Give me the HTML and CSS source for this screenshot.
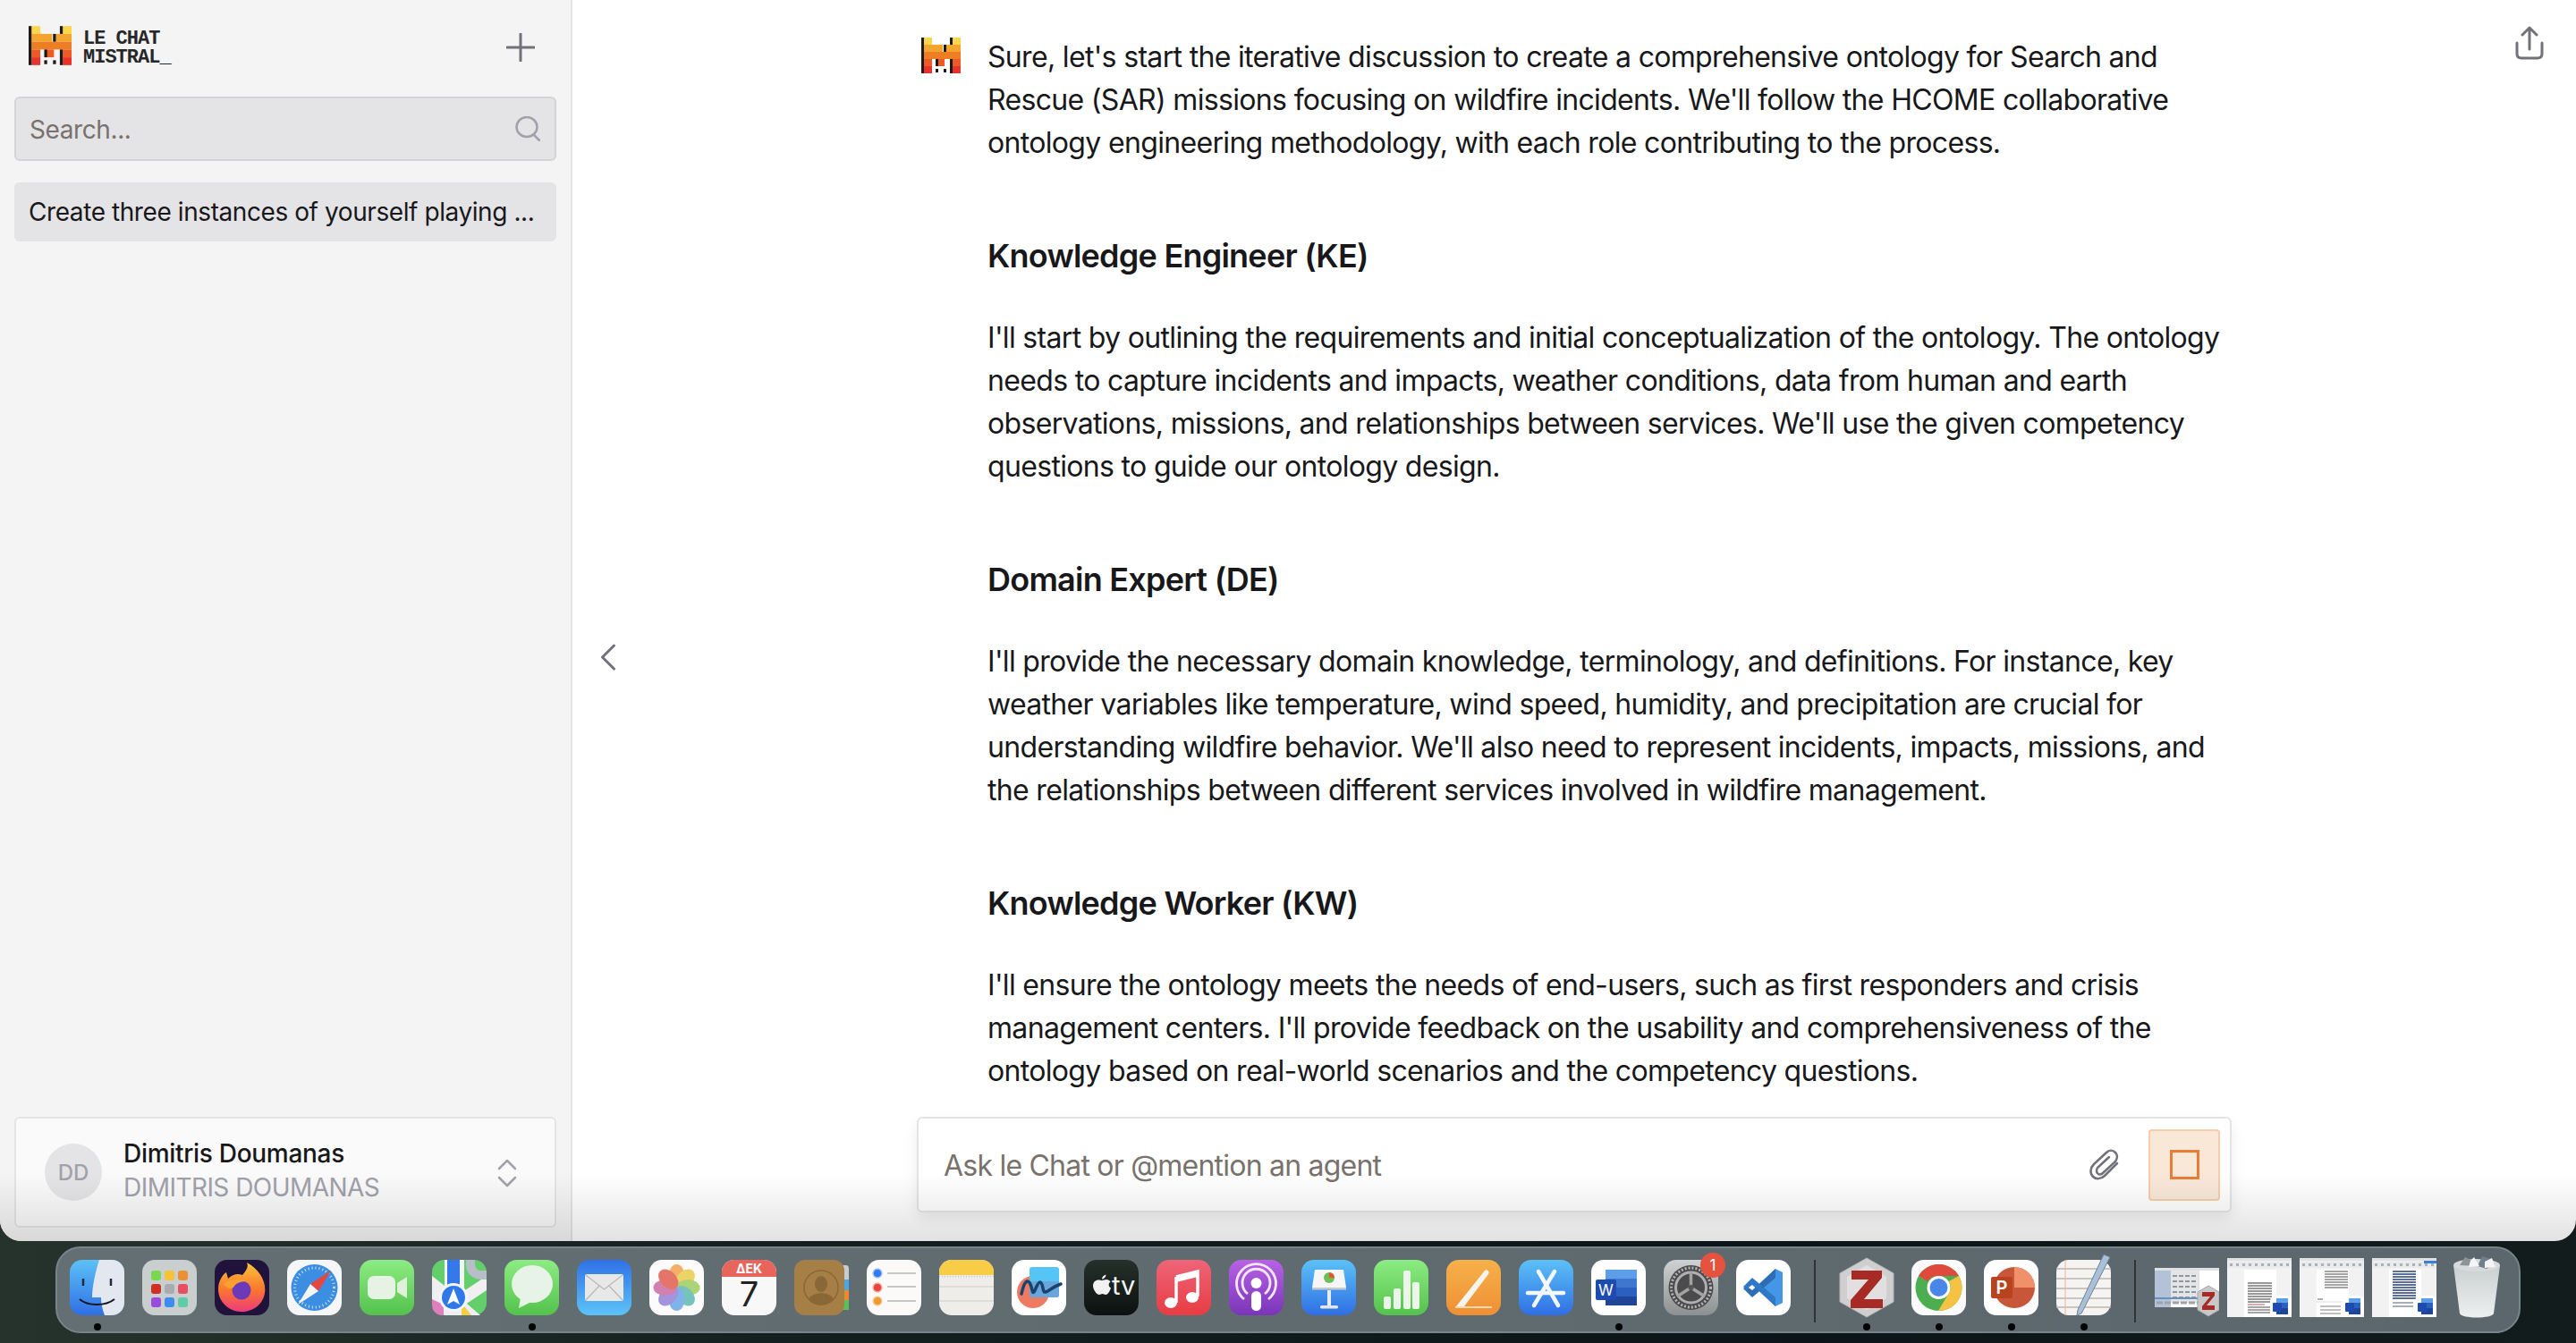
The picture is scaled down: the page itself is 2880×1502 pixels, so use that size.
FILE: index.html
```html
<!DOCTYPE html>
<html lang="en">
<head>
<meta charset="utf-8">
<title>Le Chat Mistral</title>
<link rel="stylesheet" href="styles.css">
</head>
<body>
<svg class="defs" aria-hidden="true">
  <defs>
    <filter id="grain" x="0" y="0" width="100%" height="100%">
      <feTurbulence type="fractalNoise" baseFrequency="0.07 0.2" numOctaves="4" seed="7"/>
      <feColorMatrix values="0 0 0 0 0.46  0 0 0 0 0.54  0 0 0 0 0.5  1.9 0 0 0 -0.74"/>
    </filter>
    <linearGradient id="wallFade" x1="0" y1="0" x2="1" y2="0"><stop offset="0" stop-color="#fff"/><stop offset=".25" stop-color="#ccc"/><stop offset=".8" stop-color="#aaa"/><stop offset="1" stop-color="#ccc"/></linearGradient>
    <mask id="wallMask"><rect width="100%" height="100%" fill="url(#wallFade)"/></mask>
    <linearGradient id="gBlue" x1="0" y1="0" x2="0" y2="1"><stop offset="0" stop-color="#5cc1f7"/><stop offset="1" stop-color="#2f6fe4"/></linearGradient>
    <linearGradient id="gMail" x1="0" y1="0" x2="0" y2="1"><stop offset="0" stop-color="#2f71e6"/><stop offset="1" stop-color="#5cc4f8"/></linearGradient>
    <linearGradient id="gGreen" x1="0" y1="0" x2="0" y2="1"><stop offset="0" stop-color="#8cec82"/><stop offset="1" stop-color="#54c24c"/></linearGradient>
    <linearGradient id="gRed" x1="0" y1="0" x2="0" y2="1"><stop offset="0" stop-color="#ee6578"/><stop offset="1" stop-color="#e83c42"/></linearGradient>
    <linearGradient id="gPurple" x1="0" y1="0" x2="0" y2="1"><stop offset="0" stop-color="#b862e6"/><stop offset="1" stop-color="#7a35b8"/></linearGradient>
    <linearGradient id="gOrange" x1="0" y1="0" x2="0" y2="1"><stop offset="0" stop-color="#f6b14a"/><stop offset="1" stop-color="#ef8f35"/></linearGradient>
    <linearGradient id="gGrey" x1="0" y1="0" x2="0" y2="1"><stop offset="0" stop-color="#cfd2d2"/><stop offset="1" stop-color="#8d9090"/></linearGradient>
    <linearGradient id="gDark" x1="0" y1="0" x2="0" y2="1"><stop offset="0" stop-color="#25302b"/><stop offset="1" stop-color="#0c1110"/></linearGradient>
    <linearGradient id="gFox" x1="0" y1="0" x2="0" y2="1"><stop offset="0" stop-color="#ffc53a"/><stop offset=".55" stop-color="#f9772f"/><stop offset="1" stop-color="#ee3a7c"/></linearGradient>
    <linearGradient id="gTrash" x1="0" y1="0" x2="0" y2="1"><stop offset="0" stop-color="#c9cfd0"/><stop offset="1" stop-color="#eef0f0"/></linearGradient>
    <symbol id="mistral" viewBox="0 0 44 40">
      <rect x="3" y="0" width="9" height="8" fill="#fbd54a"/><rect x="35" y="0" width="9" height="8" fill="#fbd54a"/>
      <rect x="3" y="8" width="21" height="8" fill="#f4a530"/><rect x="28" y="8" width="16" height="8" fill="#f4a530"/>
      <rect x="3" y="16" width="41" height="8" fill="#ee7e24"/>
      <rect x="3" y="24" width="9" height="8" fill="#ee5a25"/><rect x="18" y="24" width="8" height="8" fill="#ee5a25"/><rect x="35" y="24" width="9" height="8" fill="#ee5a25"/>
      <rect x="3" y="32" width="9" height="8" fill="#e9322a"/><rect x="35" y="32" width="9" height="8" fill="#e9322a"/>
      <rect x="0" y="0" width="3" height="40" fill="#1d1a18"/><rect x="32" y="0" width="3" height="8" fill="#1d1a18"/>
      <rect x="25" y="8" width="3" height="8" fill="#1d1a18"/><rect x="16" y="24" width="3" height="8" fill="#1d1a18"/>
      <rect x="32" y="24" width="3" height="16" fill="#1d1a18"/><rect x="16" y="35" width="3" height="4" fill="#1d1a18"/><rect x="25" y="35" width="3" height="4" fill="#1d1a18"/>
    </symbol>
    <symbol id="wordmini" viewBox="0 0 24 24">
      <rect width="24" height="24" rx="6" fill="#fff"/>
      <rect x="7" y="3" width="13" height="18" rx="1.5" fill="#2b5fc0"/><rect x="7" y="3" width="13" height="5" fill="#5c9fe8"/><rect x="7" y="14" width="13" height="7" fill="#1f4596"/>
      <rect x="3" y="8" width="10" height="10" rx="1" fill="#1d4bb0"/>
    </symbol>
    <symbol id="doc" viewBox="0 0 72 66">
      <rect width="72" height="66" fill="#f2f2f2"/><rect width="72" height="3" fill="#dfe1e3"/>
      <rect x="1" y="4" width="70" height="7" fill="#e9eaeb"/>
      <path d="M3 7.500H69" stroke="#aab0b8" stroke-width="3" stroke-dasharray="3 4" fill="none"/>
      <rect x="19" y="13" width="36" height="53" fill="#fff"/>
    </symbol>
  </defs>
</svg>

<div class="window">
  <aside class="sidebar">
    <header class="brand">
      <div class="logo-wrap">
        <svg class="logo"><use href="#mistral"/></svg>
        <div class="wordmark"><span>LE CHAT</span><span>MISTRAL_</span></div>
      </div>
      <svg class="plus" viewBox="0 0 32 32"><path d="M16 1V31M1 16H31"/></svg>
    </header>
    <div class="search">
      <span class="search-text">Search...</span>
      <svg class="search-icon" viewBox="0 0 28 28"><ellipse cx="13" cy="12" rx="11.500" ry="11"/><path d="M21 21l6 6"/></svg>
    </div>
    <div class="chat-item">Create three instances of yourself playing ...</div>
    <div class="user-card">
      <div class="avatar">DD</div>
      <div class="user-text">
        <div class="user-name">Dimitris Doumanas</div>
        <div class="user-sub">DIMITRIS DOUMANAS</div>
      </div>
      <svg class="updown" viewBox="0 0 22 32"><path d="M2 11L11 2L20 11M2 21L11 30L20 21"/></svg>
    </div>
  </aside>

  <main class="main">
    <svg class="collapse" viewBox="0 0 18 30"><path d="M15.500 2L2.500 15L15.500 28"/></svg>
    <svg class="share" viewBox="0 0 32 38"><path d="M16 3V26M8 10L16 2L24 10M2 19V31Q2 36 7 36H25Q30 36 30 31V19"/></svg>
    <section class="chat">
      <svg class="msg-logo"><use href="#mistral"/></svg>
      <article class="msg">
        <p>Sure, let's start the iterative discussion to create a comprehensive ontology for Search and Rescue (SAR) missions focusing on wildfire incidents. We'll follow the HCOME collaborative ontology engineering methodology, with each role contributing to the process.</p>
        <h2>Knowledge Engineer (KE)</h2>
        <p>I'll start by outlining the requirements and initial conceptualization of the ontology. The ontology needs to capture incidents and impacts, weather conditions, data from human and earth observations, missions, and relationships between services. We'll use the given competency questions to guide our ontology design.</p>
        <h2>Domain Expert (DE)</h2>
        <p>I'll provide the necessary domain knowledge, terminology, and definitions. For instance, key weather variables like temperature, wind speed, humidity, and precipitation are crucial for understanding wildfire behavior. We'll also need to represent incidents, impacts, missions, and the relationships between different services involved in wildfire management.</p>
        <h2>Knowledge Worker (KW)</h2>
        <p>I'll ensure the ontology meets the needs of end-users, such as first responders and crisis management centers. I'll provide feedback on the usability and comprehensiveness of the ontology based on real-world scenarios and the competency questions.</p>
      </article>
    </section>
    <div class="composer">
      <span class="placeholder">Ask le Chat or @mention an agent</span>
      <svg class="clip" viewBox="0 0 38 38"><path d="M33 17L19 31C15 35 9 35 6 32C2 28 3 22 7 18L21 5C24 2 28 2 31 5C34 8 33 12 31 15L17 28C15 30 12 30 11 28C9 26 10 24 11 22L24 10"/></svg>
      <button class="stop" type="button"><span class="stop-square"></span></button>
    </div>
  </main>
  <div class="fade"></div>
</div>

<footer class="desktop">
  <svg class="wall" aria-hidden="true"><g mask="url(#wallMask)"><rect width="100%" height="100%" filter="url(#grain)"/></g></svg>
  <nav class="dock">
    <div class="cell"><svg class="ic" viewBox="0 0 61 62"><rect width="61" height="62" rx="14" fill="url(#gBlue)"/><path d="M33 0H47A14 14 0 0 1 61 14V48A14 14 0 0 1 47 62H39C36 54 35 47 35 42H25C25 30 29 12 33 0Z" fill="#e2e7f0"/><path d="M15 21V29M46 21V29" stroke="#23283a" stroke-width="2.500"/><path d="M11 44C20 52 40 52 50 44" stroke="#16181f" stroke-width="2" fill="none"/></svg><i class="dot"></i></div>

    <div class="cell"><svg class="ic" viewBox="0 0 61 62"><rect width="61" height="62" rx="14" fill="#c9cecf"/><rect x="10" y="12" width="11" height="11" rx="3" fill="#79d84f"/><rect x="25" y="12" width="11" height="11" rx="3" fill="#f6c239"/><rect x="40" y="12" width="11" height="11" rx="3" fill="#ec8f35"/><rect x="10" y="27" width="11" height="11" rx="3" fill="#cf3023"/><rect x="25" y="27" width="11" height="11" rx="3" fill="#a5adb1"/><rect x="40" y="27" width="11" height="11" rx="3" fill="#e84e62"/><rect x="10" y="42" width="11" height="11" rx="3" fill="#9a4bdc"/><rect x="25" y="42" width="11" height="11" rx="3" fill="#3c8cf2"/><rect x="40" y="42" width="11" height="11" rx="3" fill="#5ecba9"/></svg></div>

    <div class="cell"><svg class="ic" viewBox="0 0 61 62"><rect width="61" height="62" rx="14" fill="#20123a"/><path d="M36 3C50 11 58 24 56 37C54 50 43 58 30 58C16 58 4 47 4 33C4 25 8 17 13 14L15 21C20 16 26 15 31 17C36 11 38 8 36 3Z" fill="url(#gFox)"/><circle cx="30" cy="34" r="10.500" fill="#6c3ab7"/><path d="M10 27C16 22 27 20 36 24C27 24 23 27 21 31C16 33 13 31 10 27Z" fill="#f9a02f"/></svg></div>

    <div class="cell"><svg class="ic" viewBox="0 0 61 62"><rect width="61" height="62" rx="14" fill="#f4f6f7"/><circle cx="30.500" cy="31" r="26" fill="#3c8ee2"/><circle cx="30.500" cy="31" r="22" fill="none" stroke="#cfe4f6" stroke-width="3" stroke-dasharray="1 3"/><path d="M49 12L26 27L35 35Z" fill="#e8453c"/><path d="M12 50L35 35L26 27Z" fill="#f4f4f4"/></svg></div>

    <div class="cell"><svg class="ic" viewBox="0 0 61 62"><rect width="61" height="62" rx="14" fill="url(#gGreen)"/><rect x="9" y="18" width="31" height="26" rx="7" fill="#e6f3e4"/><path d="M53 19V43L42 36V26Z" fill="#dff0dc"/></svg></div>

    <div class="cell"><svg class="ic" viewBox="0 0 61 62"><rect width="61" height="62" rx="14" fill="#63cf6a"/><path d="M0 18L31 42L54 62H33L31 62H14L0 50Z" fill="#efeff2"/><path d="M0 44L13 50V62H10Q0 60 0 50Z" fill="#e07fbe"/><path d="M33 48L44 62H33Z" fill="#f6cc43"/><path d="M37 50L61 34V18L31 38Z" fill="#f0f0f3"/><rect x="14" y="0" width="22" height="38" fill="#f4f5f8"/><rect x="17" y="0" width="14" height="40" fill="#3478ea"/><path d="M38 0V6C38 14 44 21 54 22H61V12H54C50 12 48 8 48 3V0Z" fill="#b7bec8"/><circle cx="24" cy="42" r="16" fill="#f4f5f8"/><circle cx="24" cy="42" r="13" fill="#3078e8"/><path d="M24 32L31 50L24 46L17 50Z" fill="#fff"/></svg></div>

    <div class="cell"><svg class="ic" viewBox="0 0 61 62"><rect width="61" height="62" rx="14" fill="url(#gGreen)"/><ellipse cx="31" cy="27" rx="23" ry="21" fill="#e7f3e6"/><path d="M18 42L16 54L30 47Z" fill="#e7f3e6"/></svg><i class="dot"></i></div>

    <div class="cell"><svg class="ic" viewBox="0 0 61 62"><rect width="61" height="62" rx="14" fill="url(#gMail)"/><rect x="9" y="16" width="43" height="30" rx="2" fill="#e8e8e8"/><path d="M10 17L30.500 33L51 17M10 45L25 29M51 45L36 29" stroke="#b6b8ba" stroke-width="1.200" fill="none"/></svg></div>

    <div class="cell"><svg class="ic" viewBox="0 0 61 62"><rect width="61" height="62" rx="14" fill="#fbfbfb"/><g opacity=".78"><ellipse cx="30.500" cy="18" rx="9" ry="13" fill="#f39a3f"/><ellipse cx="30.500" cy="18" rx="9" ry="13" fill="#e8c93c" transform="rotate(45 30.500 31)"/><ellipse cx="30.500" cy="18" rx="9" ry="13" fill="#96c952" transform="rotate(90 30.500 31)"/><ellipse cx="30.500" cy="18" rx="9" ry="13" fill="#4fb5a8" transform="rotate(135 30.500 31)"/><ellipse cx="30.500" cy="18" rx="9" ry="13" fill="#5e9fe6" transform="rotate(180 30.500 31)"/><ellipse cx="30.500" cy="18" rx="9" ry="13" fill="#8b78d4" transform="rotate(225 30.500 31)"/><ellipse cx="30.500" cy="18" rx="9" ry="13" fill="#c65f9c" transform="rotate(270 30.500 31)"/><ellipse cx="30.500" cy="18" rx="9" ry="13" fill="#e04f42" transform="rotate(315 30.500 31)"/></g></svg></div>

    <div class="cell"><svg class="ic" viewBox="0 0 61 62"><rect width="61" height="62" rx="14" fill="#f8f8f8"/><path d="M0 19V14A14 14 0 0 1 14 0H47A14 14 0 0 1 61 14V19Z" fill="#e8655c"/><text class="cal-m" x="30.500" y="15">ΔΕΚ</text><text class="cal-d" x="30.500" y="52">7</text></svg></div>

    <div class="cell"><svg class="ic" viewBox="0 0 61 62"><path d="M52 6H58Q61 6 61 10V50Q61 56 55 56H52Z" fill="#c9cbcc"/><path d="M54 22H61V34H54Z" fill="#4aa8e8"/><path d="M54 34H61V45H54Z" fill="#ec8a2d"/><path d="M54 45H61V56H54Z" fill="#5cc05a"/><rect width="56" height="62" rx="12" fill="#a67f47"/><circle cx="30" cy="31" r="19" fill="none" stroke="#8a6736" stroke-width="1.500"/><ellipse cx="30" cy="27" rx="7" ry="9" fill="#8a6736"/><path d="M16 44C20 35 40 35 44 44C38 52 22 52 16 44Z" fill="#8a6736"/></svg></div>

    <div class="cell"><svg class="ic" viewBox="0 0 61 62"><rect width="61" height="62" rx="14" fill="#fbfaf9"/><circle cx="12" cy="15" r="5" fill="#2f7bf0" stroke="#a9c8f7" stroke-width="1.500"/><circle cx="12" cy="31" r="5" fill="#e8453c" stroke="#f3b2ad" stroke-width="1.500"/><circle cx="12" cy="46" r="5" fill="#ef9a30" stroke="#f6d2a2" stroke-width="1.500"/><path d="M23 15H55M23 30H55M23 46H55" stroke="#b6b6b6" stroke-width="1.500"/></svg></div>

    <div class="cell"><svg class="ic" viewBox="0 0 61 62"><rect width="61" height="62" rx="14" fill="#efede9"/><path d="M0 17V14A14 14 0 0 1 14 0H47A14 14 0 0 1 61 14V17Z" fill="#f8cc45"/><path d="M0 30H61M0 46H61" stroke="#cfcdc8" stroke-width="1.200"/><path d="M0 18.500H61" stroke="#c7c4bd" stroke-width="1.500" stroke-dasharray="1 2"/></svg></div>

    <div class="cell"><svg class="ic" viewBox="0 0 61 62"><rect width="61" height="62" rx="14" fill="#fff"/><circle cx="24" cy="36" r="18" fill="#ee7a62"/><rect x="20" y="8" width="33" height="34" rx="3" fill="#55c5f5"/><path d="M20 24L53 24V39Q53 42 50 42H23Q20 42 20 39Z" fill="#6aa6dc"/><path d="M11 38C15 20 20 20 23 34C25 43 28 24 32 25C36 27 34 37 38 36C42 35 46 30 55 27" fill="none" stroke="#18446f" stroke-width="3.500" stroke-linecap="round"/></svg></div>

    <div class="cell"><svg class="ic" viewBox="0 0 61 62"><rect width="61" height="62" rx="14" fill="url(#gDark)"/><path d="M20 23C22 23 23 22 25 22C27 22 28.500 23 29.500 24.500C27 26 27 30 30 31.500C29 34 27 39 24 39C22.500 39 22 38 20.500 38C19 38 18.500 39 17 39C14 39 10 33 10 29C10 24 14 22 16.500 22.500C18 22.500 19 23 20 23ZM20 21.500C20 19 22 17 24.500 16.500C24.500 19 22.500 21.500 20 21.500Z" fill="#f2f2f2"/><text class="tv" x="31" y="39">tv</text></svg></div>

    <div class="cell"><svg class="ic" viewBox="0 0 61 62"><rect width="61" height="62" rx="14" fill="url(#gRed)"/><path d="M22 19L46 13V41" fill="none" stroke="#fff" stroke-width="3.500"/><path d="M22 19V48" stroke="#fff" stroke-width="3.500"/><path d="M22 19L46 13V19L22 25Z" fill="#fff"/><ellipse cx="16" cy="48" rx="7" ry="6" fill="#fff"/><ellipse cx="40" cy="42" rx="7" ry="6" fill="#fff"/></svg></div>

    <div class="cell"><svg class="ic" viewBox="0 0 61 62"><rect width="61" height="62" rx="14" fill="url(#gPurple)"/><g fill="none" stroke="#f3e6fa" stroke-width="2.800"><path d="M17 44A22 22 0 1 1 44 44"/><path d="M21 38A15.500 15.500 0 1 1 40 38"/></g><circle cx="30.500" cy="26" r="6" fill="#fff"/><rect x="25" y="35" width="11" height="22" rx="5.500" fill="#fff"/></svg></div>

    <div class="cell"><svg class="ic" viewBox="0 0 61 62"><rect width="61" height="62" rx="14" fill="url(#gBlue)"/><path d="M15 11H47L50 31H12Z" fill="#f6f6f6"/><circle cx="31" cy="20" r="6" fill="#6cbe57"/><path d="M31 20V14A6 6 0 0 1 37 20Z" fill="#e5582f"/><rect x="12" y="31" width="38" height="2.500" fill="#c4c9cf"/><rect x="29" y="34" width="4" height="18" fill="#e9eef3"/><rect x="21" y="51" width="20" height="3.500" rx="1.500" fill="#e2e7ec"/></svg></div>

    <div class="cell"><svg class="ic" viewBox="0 0 61 62"><rect width="61" height="62" rx="14" fill="url(#gGreen)"/><rect x="11" y="41" width="8" height="14" rx="2" fill="#ecf5ea"/><rect x="22" y="32" width="8" height="23" rx="2" fill="#ecf5ea"/><rect x="33" y="12" width="8" height="43" rx="2" fill="#ecf5ea"/><rect x="43" y="25" width="8" height="30" rx="2" fill="#ecf5ea"/></svg></div>

    <div class="cell"><svg class="ic" viewBox="0 0 61 62"><rect width="61" height="62" rx="14" fill="url(#gOrange)"/><path d="M11 52L43 12C45 10 49 13 47 16L20 52L10 54Z" fill="#f7f4ee"/><rect x="10" y="52" width="41" height="2" fill="#f9d9ae"/></svg></div>

    <div class="cell"><svg class="ic" viewBox="0 0 61 62"><rect width="61" height="62" rx="14" fill="url(#gBlue)"/><g stroke="#f4f8fd" stroke-width="4.500" stroke-linecap="round" fill="none"><path d="M22 13L44 51"/><path d="M40 13L17 51"/><path d="M10 37H50"/></g></svg></div>

    <div class="cell"><svg class="ic" viewBox="0 0 61 62"><rect width="61" height="62" rx="14" fill="#fff"/><rect x="16" y="11" width="35" height="40" fill="#2b5fc0" rx="2"/><rect x="16" y="11" width="35" height="10" fill="#5c9fe8"/><rect x="16" y="21" width="35" height="10" fill="#3f77cf"/><rect x="16" y="41" width="35" height="10" fill="#1f4596"/><rect x="5" y="22" width="23" height="23" rx="2" fill="#1d4bb0"/><text class="word-w" x="16.500" y="40">W</text></svg><i class="dot"></i></div>

    <div class="cell"><svg class="ic" viewBox="0 0 61 62"><rect width="61" height="62" rx="14" fill="url(#gGrey)"/><circle cx="30.500" cy="31" r="25" fill="#4b4b4d"/><circle cx="30.500" cy="31" r="22" fill="none" stroke="#b5b5b5" stroke-width="3" stroke-dasharray="2 2"/><circle cx="30.500" cy="31" r="17" fill="none" stroke="#b0b0b0" stroke-width="3"/><path d="M30.500 31V14M30.500 31L15 41M30.500 31L46 41" stroke="#a2a2a2" stroke-width="3.500"/><circle cx="30.500" cy="31" r="3" fill="#555"/></svg><span class="badge">1</span></div>

    <div class="cell"><svg class="ic" viewBox="0 0 61 62"><rect width="61" height="62" rx="14" fill="#fff"/><path d="M44 10L52 14V48L44 52L22 31Z" fill="#4496e6"/><path d="M44 10L18 34L11 29L8 32L18 42L44 20Z" fill="#2c6db4"/><path d="M44 52L18 28L11 33L8 30L18 20L44 42Z" fill="#2f78c6"/></svg></div>

    <i class="sep"></i>

    <div class="cell"><svg class="ic wide" viewBox="0 0 64 66"><path d="M32 0L62 17V49L32 66L2 49V17Z" fill="#cfcfcf" stroke="#b5b5b5"/><path d="M32 8L54 21V45L32 58L10 45V21Z" fill="#e1dfdf"/><path d="M15 14H49V22L29 46H50V56H14V47L34 24H15Z" fill="#a82a25"/></svg><i class="dot"></i></div>

    <div class="cell"><svg class="ic" viewBox="0 0 61 62"><rect width="61" height="62" rx="14" fill="#fbfbfb"/><circle cx="30.500" cy="31" r="26" fill="#4cae50"/><path d="M30.500 5A26 26 0 0 1 53 18H30A13 13 0 0 0 18 24L8 18A26 26 0 0 1 30.500 5Z" fill="#df4a3c"/><path d="M53 18A26 26 0 0 1 30 57L42 37A13 13 0 0 0 42 24Z" fill="#f6c243"/><circle cx="30.500" cy="31" r="13" fill="#fff"/><circle cx="30.500" cy="31" r="10" fill="#4a85e8"/></svg><i class="dot"></i></div>

    <div class="cell"><svg class="ic" viewBox="0 0 61 62"><rect width="61" height="62" rx="14" fill="#fff"/><circle cx="34" cy="31" r="23" fill="#c8573a"/><path d="M34 8A23 23 0 0 1 57 31H34Z" fill="#f0916c"/><rect x="8" y="19" width="24" height="24" rx="2" fill="#b7431f"/><text class="ppt-p" x="20" y="38">P</text></svg><i class="dot"></i></div>

    <div class="cell"><svg class="ic" viewBox="0 0 61 62"><rect width="61" height="62" rx="14" fill="#f6f4f1"/><path d="M0 10H61M0 21H61M0 32H61M0 43H61M0 53H61" stroke="#b9b7b4" stroke-width="1.500"/><path d="M10 0V62" stroke="#edb1a8" stroke-width="1"/><path d="M53 -6L60 -3L28 60L23 62L24 56Z" fill="#a9c0d6" stroke="#6d8296"/></svg><i class="dot"></i></div>

    <i class="sep"></i>

    <div class="cell"><svg class="thumb" viewBox="0 0 72 66"><rect y="11" width="72" height="44" fill="#fff"/><rect y="11" width="72" height="3" fill="#dfe1e3"/><rect y="14" width="18" height="41" fill="#b3c2d6"/><rect x="18" y="14" width="32" height="36" fill="#e3e5e6"/><path d="M20 20H48M20 26H48M20 32H48M20 38H48M20 44H48" stroke="#8f979d" stroke-width="2" stroke-dasharray="5 2"/><rect y="44" width="50" height="2" fill="#6b8fc2"/><path d="M2 50H48" stroke="#a0a4a8" stroke-width="3" stroke-dasharray="7 2"/><path d="M60 31L72 38V58L60 65L48 58V38Z" fill="#c9c8c8" stroke="#a7a7a7"/><path d="M53 38H67V42L58 53H67V58H53V54L62 43H53Z" fill="#a82a25"/></svg></div>

    <div class="cell"><svg class="thumb" viewBox="0 0 72 66"><use href="#doc"/><g stroke="#777" fill="none"><path d="M23 28H50M23 31H50M23 34H50M23 37H50M23 40H50M23 43H50M23 46H50M23 49H50" stroke-width="1.600"/></g><path d="M23 52H42" stroke="#c99" stroke-width="1.600"/><path d="M23 55H50M23 58H50M23 61H48" stroke="#888" stroke-width="1.600"/><use href="#wordmini" x="48" y="42" width="24" height="24"/></svg></div>

    <div class="cell"><svg class="thumb" viewBox="0 0 72 66"><use href="#doc"/><path d="M28 15H54M28 18H54M28 21H54M28 24H54M28 27H54M28 30H54M28 33H54" stroke="#888" stroke-width="1.600"/><path d="M20 46H26" stroke="#999" stroke-width="1.600"/><rect x="19" y="50" width="36" height="16" fill="#fff"/><path d="M19 49H72" stroke="#ddd"/><path d="M23 54H46M23 58H46M23 62H46" stroke="#aaa" stroke-width="1.400"/><use href="#wordmini" x="48" y="42" width="24" height="24"/></svg></div>

    <div class="cell"><svg class="thumb" viewBox="0 0 72 66"><use href="#doc"/><rect x="58" y="3" width="14" height="3" fill="#3d7de0"/><path d="M23 15H49M23 18H49M23 21H49M23 24H49M23 27H49M23 30H49M23 33H49M23 36H49M23 39H49M23 42H49M23 45H49" stroke="#5b6f99" stroke-width="2"/><path d="M23 50H46M23 54H46" stroke="#8a93a8" stroke-width="1.600"/><use href="#wordmini" x="48" y="42" width="24" height="24"/></svg></div>

    <div class="cell"><svg class="ic trash" viewBox="0 0 54 70"><path d="M1 10C8 15 46 15 53 10L46 64C44 70 10 70 8 64Z" fill="url(#gTrash)"/><ellipse cx="27" cy="10" rx="26" ry="7" fill="#d7dadb"/><path d="M8 10L14 1L22 5L27 11Z" fill="#8e9396"/><path d="M28 11L33 0L43 3L47 9L38 14Z" fill="#6f7f8c"/><path d="M20 5L24 1L30 11L18 12Z" fill="#f5f5f5"/><path d="M36 6L44 2L48 12L36 13Z" fill="#f4f4f4"/></svg></div>
  </nav>
</footer>
</body>
</html>
```

FILE: styles.css
```css
* { box-sizing: border-box; }
html, body { margin: 0; height: 1502px; overflow: hidden; }
body {
  display: flex;
  flex-direction: column;
  font-family: "Inter", "Liberation Sans", sans-serif;
  color: #18181b;
  background: linear-gradient(90deg, #26332d 0, #14201f 30%, #0b1519 70%, #131c1c 100%);
}
.defs { position: absolute; width: 0; height: 0; }

.window {
  position: relative;
  display: flex;
  height: 1388px;
  flex: none;
  background: #fff;
  border-radius: 0 0 24px 24px;
  overflow: hidden;
}
.fade {
  position: absolute;
  left: 0;
  right: 0;
  bottom: 0;
  height: 76px;
  background: linear-gradient(180deg, rgba(0,0,0,0), rgba(0,0,0,.115));
  pointer-events: none;
}

/* sidebar */
.sidebar {
  width: 640px;
  flex: none;
  display: flex;
  flex-direction: column;
  padding: 0 16px;
  background: #f4f4f5;
  border-right: 2px solid #e4e4e7;
}
.brand {
  display: flex;
  align-items: center;
  justify-content: space-between;
  height: 102px;
  margin-bottom: 6px;
  padding: 0 24px 0 16px;
}
.logo-wrap { display: flex; align-items: center; gap: 13px; }
.logo { width: 48px; height: 44px; }
.wordmark {
  display: flex;
  flex-direction: column;
  margin-top: 6px;
  font-family: "Liberation Mono", monospace;
  font-weight: 700;
  font-size: 22px;
  letter-spacing: -1px;
  line-height: 21px;
  color: #27272a;
}
.plus { width: 32px; height: 32px; margin-top: 3px; fill: none; stroke: #71717a; stroke-width: 3; stroke-linecap: round; }
.search {
  display: flex;
  align-items: center;
  justify-content: space-between;
  height: 72px;
  padding: 0 16px 0 15px;
  background: #e4e4e7;
  border: 2px solid #d4d4d8;
  border-radius: 6px;
}
.search-text { padding-top: 2px; font-size: 28px; letter-spacing: -.4px; color: #78716c; }
.search-icon { width: 28px; height: 28px; fill: none; stroke: #a1a1aa; stroke-width: 2.500; stroke-linecap: round; }
.chat-item {
  display: flex;
  align-items: center;
  height: 66px;
  margin-top: 24px;
  padding: 0 16px;
  background: #e4e4e7;
  border-radius: 6px;
  font-size: 28px;
  letter-spacing: -.42px;
  white-space: nowrap;
  color: #18181b;
}
.user-card {
  display: flex;
  align-items: center;
  gap: 24px;
  height: 124px;
  margin-top: auto;
  margin-bottom: 15px;
  padding: 0 42px 0 32px;
  background: #fafafa;
  border: 2px solid #e4e4e7;
  border-radius: 6px;
}
.avatar {
  display: flex;
  align-items: center;
  justify-content: center;
  width: 64px;
  height: 64px;
  flex: none;
  border-radius: 50%;
  background: #e4e4e7;
  color: #a1a1aa;
  font-size: 24px;
  font-weight: 500;
}
.user-text { flex: 1; padding-bottom: 4px; }
.user-name { font-size: 28px; line-height: 38px; font-weight: 500; letter-spacing: -.3px; color: #18181b; }
.user-sub { font-size: 28px; line-height: 38px; letter-spacing: -.54px; color: #a1a1aa; }
.updown { width: 22px; height: 32px; margin-top: 2px; fill: none; stroke: #a1a1aa; stroke-width: 2.500; stroke-linecap: round; stroke-linejoin: round; }

/* main */
.main { position: relative; flex: 1; min-width: 0; display: flex; flex-direction: column; }
.collapse {
  position: absolute;
  left: 31px;
  top: 720px;
  width: 18px;
  height: 30px;
  fill: none;
  stroke: #71717a;
  stroke-width: 3;
  stroke-linecap: round;
  stroke-linejoin: round;
}
.share {
  position: absolute;
  right: 36px;
  top: 29px;
  width: 32px;
  height: 38px;
  fill: none;
  stroke: #71717a;
  stroke-width: 3;
  stroke-linecap: round;
  stroke-linejoin: round;
}
.chat {
  flex: 1;
  min-height: 0;
  display: flex;
  align-items: flex-start;
  gap: 30px;
  padding: 40px 0 0 390px;
  overflow: hidden;
}
.msg-logo { width: 44px; height: 40px; margin-top: 2px; flex: none; }
.msg { width: 1391px; font-size: 32px; line-height: 48px; letter-spacing: -.67px; color: #18181b; }
.msg p { margin: 0; }
.msg h2 { margin: 78px 0 44px; font-size: 36px; line-height: 48px; font-weight: 600; letter-spacing: -.76px; }
.composer {
  display: flex;
  align-items: center;
  width: 1470px;
  height: 107px;
  margin: 0 0 32px 385px;
  padding: 0 11px 0 28px;
  background: #fff;
  border: 2px solid #e4e4e7;
  border-radius: 6px;
  box-shadow: 0 8px 16px rgba(0,0,0,.08);
}
.placeholder { flex: 1; padding-top: 2px; font-size: 32px; letter-spacing: -.78px; color: #78716c; }
.clip { width: 38px; height: 38px; margin-right: 30px; fill: none; stroke: #71717a; stroke-width: 2.500; stroke-linecap: round; }
.stop {
  display: flex;
  align-items: center;
  justify-content: center;
  width: 80px;
  height: 80px;
  padding: 0;
  background: #f9e8d8;
  border: 2px solid #f6cdaa;
  border-radius: 4px;
}
.stop-square { width: 33px; height: 33px; border: 3px solid #ea7d33; }

/* desktop & dock */
.desktop {
  position: relative;
  flex: 1;
  padding: 6px 62px 11px;
}
.wall { position: absolute; left: 0; top: 0; width: 100%; height: 100%; }
.dock {
  position: relative;
  display: flex;
  align-items: flex-start;
  gap: 20px;
  height: 97px;
  padding: 13px 0 0 14px;
  background: linear-gradient(90deg, #636f73, #5b676c);
  border: 2px solid #76858a;
  border-radius: 28px;
}
.cell {
  position: relative;
  width: 61px;
  height: 80px;
  flex: none;
  display: flex;
  flex-direction: column;
  align-items: center;
}
.ic { width: 61px; height: 62px; flex: none; overflow: visible; }
.ic.wide { width: 64px; height: 66px; margin-top: -2px; margin-bottom: -2px; }
.ic.trash { width: 54px; height: 70px; margin-top: -4px; }
.thumb { width: 72px; height: 66px; flex: none; margin-top: -2px; }
.dot { width: 8px; height: 8px; margin-top: 9px; border-radius: 50%; background: #050505; }
.sep { width: 2px; height: 70px; flex: none; margin: 0 6px; background: #2d3538; }
.badge {
  position: absolute;
  right: -8px;
  top: -8px;
  width: 28px;
  height: 28px;
  border-radius: 50%;
  background: #e5533f;
  color: #fff;
  font-size: 17px;
  line-height: 28px;
  text-align: center;
}
.cal-m { font: 700 14px "Inter", sans-serif; fill: #fff; text-anchor: middle; }
.cal-d { font: 400 38px "Inter", sans-serif; fill: #222; text-anchor: middle; }
.tv { font: 400 29px "Inter", sans-serif; fill: #f2f2f2; }
.word-w { font: 400 17px "Inter", sans-serif; fill: #fff; text-anchor: middle; }
.ppt-p { font: 600 20px "Inter", sans-serif; fill: #fff; text-anchor: middle; }
```
